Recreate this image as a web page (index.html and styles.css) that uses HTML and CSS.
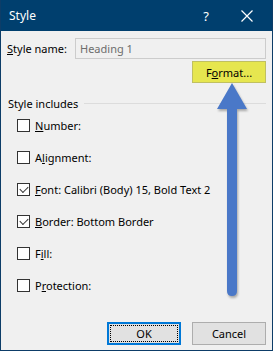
FILE: index.html
```html
<!DOCTYPE html>
<html lang="en">
<head>
    <meta charset="UTF-8">
    <title>Style</title>
    <link rel="stylesheet" href="styles.css">
</head>
<body>
    <div class="window">
        <div class="titlebar">
            <span class="title">Style</span>
            <span class="help">?</span>
            <svg class="close" width="12" height="12" viewBox="0 0 12 12">
                <path d="M0.5 0.5 L11.5 11.5 M11.5 0.5 L0.5 11.5" stroke="#fff" stroke-width="1.2" fill="none"/>
            </svg>
        </div>

        <div class="content">
            <div class="name-row">
                <label class="name-label"><u>S</u>tyle name:</label>
                <div class="name-input">Heading 1</div>
            </div>

            <div class="format-row">
                <button class="btn format">F<u>o</u>rmat...</button>
            </div>

            <div class="group-title">
                <span>Style includes</span>
                <div class="rule"></div>
            </div>

            <ul class="checks">
                <li><span class="box"></span><span><u>N</u>umber:</span></li>
                <li><span class="box"></span><span>A<u>l</u>ignment:</span></li>
                <li><span class="box checked"></span><span><u>F</u>ont: Calibri (Body) 15, Bold Text 2</span></li>
                <li><span class="box checked"></span><span><u>B</u>order: Bottom Border</span></li>
                <li><span class="box"></span><span>F<u>i</u>ll:</span></li>
                <li><span class="box"></span><span>P<u>r</u>otection:</span></li>
            </ul>

            <div class="actions">
                <button class="btn ok"><span class="focus">OK</span></button>
                <button class="btn">Cancel</button>
            </div>
        </div>

        <svg class="arrow" width="40" height="225" viewBox="0 0 40 225">
            <path d="M20 2 L35 28 L25 28 L25 210 Q25 215 20 215 Q15 215 15 210 L15 28 L5 28 Z" fill="#4a78c8"/>
        </svg>
    </div>
</body>
</html>
```

FILE: styles.css
```css
body {
    margin: 0;
    font-family: "Noto Sans", "Segoe UI", sans-serif;
    font-size: 11px;
    color: #000;
}

.window {
    position: relative;
    width: 271px;
    height: 350px;
    background: #f0f0f0;
    border: 1px solid #0d3d68;
    border-top: none;
}

.titlebar {
    height: 31px;
    background: #003f6e;
    color: #fff;
    display: flex;
    align-items: center;
    padding-left: 8px;
}

.title {
    font-size: 12px;
    flex: 1;
}

.help {
    font-size: 13px;
    margin-right: 32px;
}

.close {
    margin-right: 19px;
}

.content {
    padding: 7px 6px 0 6px;
}

.name-row {
    display: flex;
    align-items: center;
    gap: 6px;
}

.name-label {
    width: 62px;
    white-space: nowrap;
}

.name-input {
    flex: 1;
    height: 19px;
    line-height: 19px;
    border: 1px solid #cccccc;
    background: #f0f0f0;
    color: #6d6d6d;
    padding-left: 4px;
}

.format-row {
    display: flex;
    justify-content: flex-end;
    margin-top: 2px;
}

.btn {
    font-family: inherit;
    font-size: 11px;
    color: #000;
    width: 74px;
    height: 23px;
    background: #e1e1e1;
    border: 1px solid #adadad;
    padding: 0;
}

.format {
    width: 74px;
    height: 22px;
    background: #e6e64f;
    border-color: #c0c060;
}

.group-title {
    display: flex;
    align-items: center;
    gap: 6px;
    height: 16px;
    margin-top: 12px;
    padding-left: 1px;
}

.rule {
    flex: 1;
    height: 1px;
    background: #dcdcdc;
}

.checks {
    list-style: none;
    display: flex;
    flex-direction: column;
    gap: 19px;
    margin: 8px 0 0 0;
    padding: 0 0 0 10px;
}

.checks li {
    display: flex;
    align-items: center;
    gap: 5px;
    height: 13px;
}

.box {
    width: 11px;
    height: 11px;
    border: 1px solid #333;
    background: #fff;
    position: relative;
}

.box.checked::after {
    content: "";
    position: absolute;
    left: 2px;
    top: 0px;
    width: 7px;
    height: 4px;
    border-left: 1px solid #333;
    border-bottom: 1px solid #333;
    transform: translate(0, 2px) rotate(-45deg);
}

.actions {
    display: flex;
    justify-content: flex-end;
    gap: 11px;
    margin-top: 30px;
}

.ok {
    border: 2px solid #0078d7;
    padding: 1px;
}

.focus {
    display: flex;
    align-items: center;
    justify-content: center;
    height: 100%;
    border: 1px dotted #000;
    box-sizing: border-box;
}

.arrow {
    position: absolute;
    left: 211px;
    top: 81px;
    filter: drop-shadow(1px 2px 1px rgba(0, 0, 0, 0.3));
}
```
